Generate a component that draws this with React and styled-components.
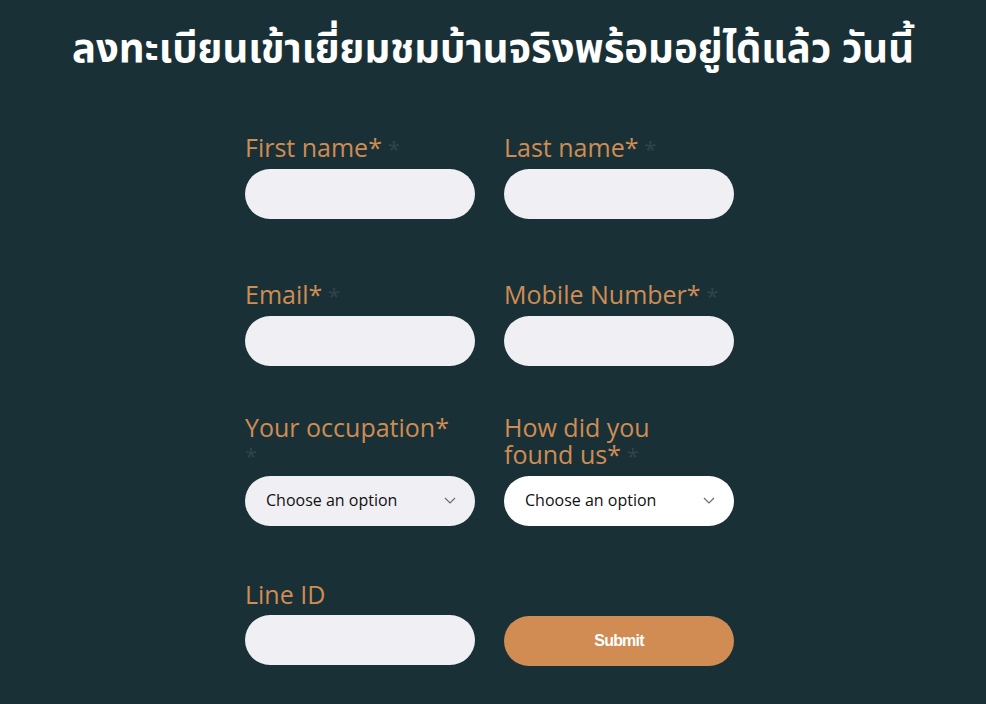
import React from "react";
import styled, { createGlobalStyle } from "styled-components";

const COLORS = {
  page: "#193136",
  accent: "#d08c53",
  field: "#f0eff4",
  muted: "#33434d",
};

const GlobalStyle = createGlobalStyle`
  html, body {
    margin: 0;
    padding: 0;
    background-color: ${COLORS.page};
  }
  * {
    box-sizing: border-box;
  }
`;

export default function App() {
  return (
    <Page>
      <GlobalStyle />
      <Title>ลงทะเบียนเข้าเยี่ยมชมบ้านจริงพร้อมอยู่ได้แล้ว วันนี้</Title>

      <Form onSubmit={(e) => e.preventDefault()}>
        <Row $top={62}>
          <Field>
            <Label>
              First name*<Extra> *</Extra>
            </Label>
            <Input type="text" />
          </Field>
          <Field>
            <Label>
              Last name*<Extra> *</Extra>
            </Label>
            <Input type="text" />
          </Field>
        </Row>

        <Row $top={62}>
          <Field>
            <Label>
              Email*<Extra> *</Extra>
            </Label>
            <Input type="email" />
          </Field>
          <Field>
            <Label>
              Mobile Number*<Extra> *</Extra>
            </Label>
            <Input type="tel" />
          </Field>
        </Row>

        <Row $top={48}>
          <Field>
            <Label>
              Your occupation*
              <br />
              <Extra>*</Extra>
            </Label>
            <SelectBox>
              <span>Choose an option</span>
              <Chevron />
            </SelectBox>
          </Field>
          <Field>
            <Label>
              How did you
              <br />
              found us*<Extra> *</Extra>
            </Label>
            <SelectBox $white>
              <span>Choose an option</span>
              <Chevron />
            </SelectBox>
          </Field>
        </Row>

        <Row $top={55}>
          <Field>
            <Label>Line ID</Label>
            <Input type="text" />
          </Field>
          <Field>
            <SubmitButton type="submit">Submit</SubmitButton>
          </Field>
        </Row>
      </Form>
    </Page>
  );
}

function Chevron() {
  return (
    <svg width="12" height="7" viewBox="0 0 12 7" fill="none">
      <path d="M1 1l5 5 5-5" stroke="#6b6b6b" strokeWidth="1.2" />
    </svg>
  );
}

const Page = styled.div`
  min-height: 704px;
  background-color: ${COLORS.page};
  padding-top: 22px;
  padding-bottom: 39px;
`;

const Title = styled.h1`
  margin: 0;
  text-align: center;
  color: #ffffff;
  font-family: "Noto Sans", "Noto Sans Thai", sans-serif;
  font-weight: 700;
  font-size: 40px;
  line-height: 50px;
`;

const Form = styled.form`
  width: 489px;
  margin-left: 245px;
`;

const Row = styled.div`
  display: grid;
  grid-template-columns: 230px 230px;
  column-gap: 29px;
  align-items: end;
  margin-top: ${(p) => p.$top}px;
`;

const Field = styled.div`
  display: flex;
  flex-direction: column;
  gap: 7px;
`;

const Label = styled.label`
  color: ${COLORS.accent};
  font-family: "Open Sans", sans-serif;
  font-size: 25px;
  line-height: 27px;
`;

const Extra = styled.span`
  color: ${COLORS.muted};
  font-size: 22px;
`;

const Input = styled.input`
  width: 230px;
  height: 50px;
  border: none;
  border-radius: 25px;
  background-color: ${COLORS.field};
  padding: 0 20px;
  outline: none;
`;

const SelectBox = styled.div`
  width: 230px;
  height: 50px;
  border-radius: 25px;
  background-color: ${(p) => (p.$white ? "#ffffff" : COLORS.field)};
  display: flex;
  align-items: center;
  justify-content: space-between;
  padding: 0 19px 2px 21px;
  color: #111;
  font-family: "Open Sans", sans-serif;
  font-size: 16px;
`;

const SubmitButton = styled.button`
  width: 230px;
  height: 50px;
  margin-bottom: -1px;
  border: none;
  border-radius: 25px;
  background-color: ${COLORS.accent};
  color: #ffffff;
  font-family: "Liberation Sans", sans-serif;
  font-weight: 700;
  font-size: 16px;
  letter-spacing: -0.8px;
  cursor: pointer;
`;
